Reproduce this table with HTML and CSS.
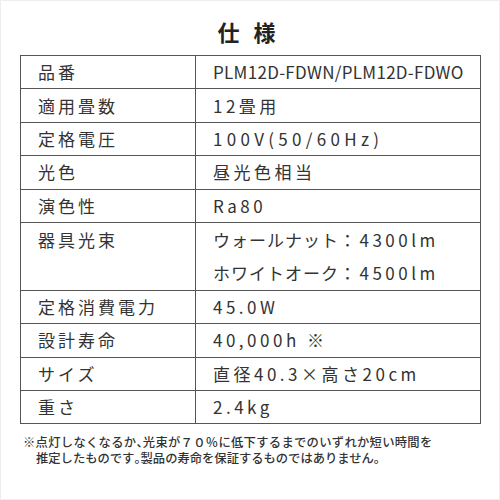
FILE: index.html
```html
<!DOCTYPE html>
<html lang="ja">
<head>
<meta charset="utf-8">
<link rel="stylesheet" href="styles.css">
</head>
<body>
<div class="page">
  <h1 class="title">仕<span class="gap"></span>様</h1>
  <table class="spec">
    <tr><th>品番</th><td class="latin">PLM12D-FDWN/PLM12D-FDWO</td></tr>
    <tr><th>適用畳数</th><td>12畳用</td></tr>
    <tr><th>定格電圧</th><td class="wide">100V(50/60Hz)</td></tr>
    <tr><th>光色</th><td>昼光色相当</td></tr>
    <tr><th>演色性</th><td>Ra80</td></tr>
    <tr class="double"><th>器具光束</th><td><div class="line"><span class="kana">ウォールナット</span>：4300lm</div><div class="line"><span class="kana">ホワイトオーク</span>：4500lm</div></td></tr>
    <tr><th>定格消費電力</th><td>45.0W</td></tr>
    <tr><th>設計寿命</th><td>40,000h ※</td></tr>
    <tr><th>サイズ</th><td>直径40.3×高さ20cm</td></tr>
    <tr><th>重さ</th><td>2.4kg</td></tr>
  </table>
  <div class="note">
    <div class="note-line first">※点灯しなくなるか<span class="punct">、</span>光束が７０％に低下するまでのいずれか短い時間を</div>
    <div class="note-line indent">推定したものです<span class="punct">。</span>製品の寿命を保証するものではありません<span class="punct">。</span></div>
  </div>
</div>
</body>
</html>
```

FILE: styles.css
```css
html, body {
  margin: 0;
  padding: 0;
  background: #fff;
}
.page {
  box-sizing: border-box;
  width: 500px;
  height: 500px;
  border: 1px solid #eeeeee;
  padding: 0 0 0 19px;
  font-family: "Noto Sans CJK JP", "Noto Sans", sans-serif;
  color: #333;
}
.title {
  margin: 0;
  padding-top: 18px;
  height: 54px;
  box-sizing: border-box;
  text-align: center;
  font-size: 22px;
  line-height: 24px;
  font-weight: 700;
  color: #222;
  width: 461px;
  padding-left: 0;
  padding-right: 8px;
}
.gap {
  display: inline-block;
  width: 14px;
}
.spec {
  border-collapse: collapse;
  width: 461px;
  table-layout: fixed;
}
.spec th, .spec td {
  border: 1px solid #555;
  height: 32.4px;
  padding: 0;
  font-size: 17px;
  line-height: 32px;
  font-weight: 400;
  text-align: left;
  vertical-align: middle;
  white-space: nowrap;
}
.spec th {
  width: 157px;
  padding-left: 17px;
  letter-spacing: 3px;
}
.spec td {
  padding-left: 17px;
  letter-spacing: 3.5px;
}
.spec .latin {
  letter-spacing: 0.3px;
}
.spec .wide {
  letter-spacing: 4.3px;
}
.kana {
  letter-spacing: 1px;
}
.spec .double th {
  vertical-align: top;
  padding-top: 1px;
}
.spec .double td {
  height: 66.8px;
}
.line {
  height: 33.4px;
  line-height: 33.4px;
}
.note {
  margin: 11px 0 0 3px;
  font-size: 12.3px;
  line-height: 15.5px;
  font-weight: 500;
  color: #333;
}
.note-line {
  white-space: nowrap;
}
.first {
  letter-spacing: 0.3px;
}
.punct {
  font-feature-settings: "halt";
}
.indent {
  padding-left: 13px;
}
```
